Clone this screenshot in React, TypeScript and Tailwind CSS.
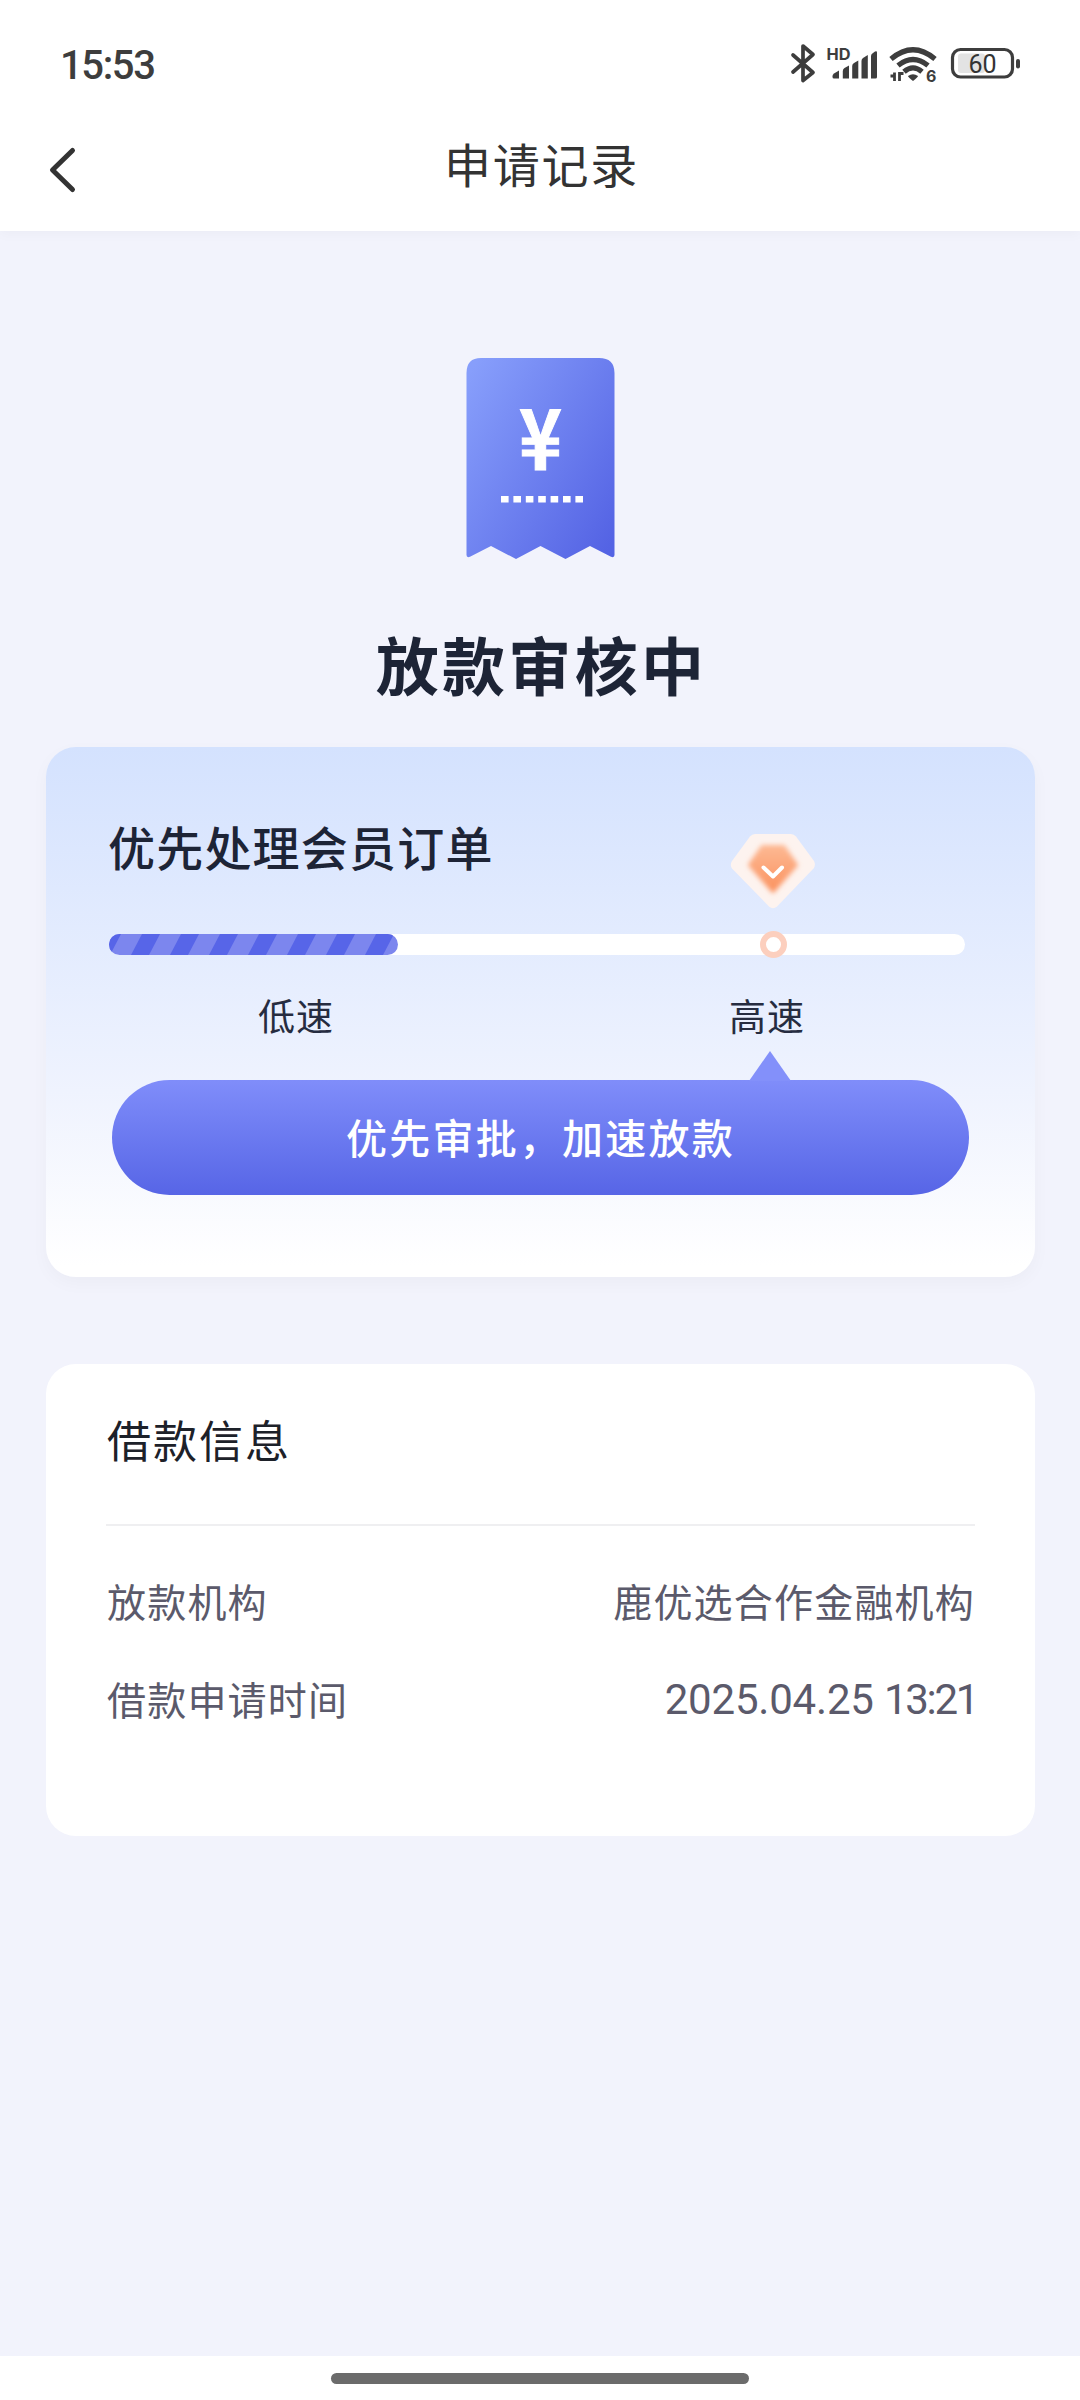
import React from "react";

function StatusIcons() {
  return (
    <svg width="236" height="44" viewBox="0 0 236 44" fill="none">
      {/* bluetooth */}
      <path d="M3 11 L23 28.500 L13 36.500 V2 L23 10.500 L3 28" transform="translate(0 1)" stroke="#3d3d3d" strokeWidth="3.7" strokeLinejoin="round" strokeLinecap="round" />
      {/* cellular signal */}
      <text x="36.500" y="17" fontFamily="Inter" fontWeight="700" fontSize="16" textLength="24" lengthAdjust="spacingAndGlyphs" fill="#3d3d3d">HD</text>
      <g fill="#3d3d3d" transform="translate(1 1)">
        <path d="M41.500 32 Q41.500 30.500 43 29.500 L48 26.500 V34.5 H43 Q41.500 34.500 41.500 33Z" />
        <path d="M51.800 27 Q51.800 25 53.500 24 L58 21.500 V34.5 H51.800Z" />
        <path d="M61.200 22 Q61.200 20 63 19 L67.300 16.500 V34.5 H61.200Z" />
        <path d="M70.500 17 Q70.500 15 72 14 L76.800 11 V34.5 H70.500Z" />
        <path d="M80 12 Q80 10 82 9 L84 7.500 Q86 6.500 86 8.500 V33 Q86 34.5 84.5 34.5 H80Z" />
      </g>
      {/* wifi */}
      <g transform="translate(1 1)">
        <g stroke="#3d3d3d" strokeWidth="5.200" fill="none">
          <path d="M100 15 Q122 -3.500 144 15" />
          <path d="M107 21.500 Q122 9.500 137 21.500" />
          <path d="M113 27.800 Q122 20 131 27.800" />
        </g>
        <path d="M117 32 Q122 28.500 127 32 Q127 33 122 37 Q117 33 117 32Z" fill="#3d3d3d" />
        <path d="M99.500 32 H103.500 V37 V28.500 M108.500 37 V29.500 H112.500" stroke="#3d3d3d" strokeWidth="2.800" />
        <text x="135" y="37.500" fontFamily="Inter" fontWeight="700" fontSize="16" fill="#3d3d3d">6</text>
      </g>
      {/* battery */}
      <rect x="168" y="10.500" width="27" height="19.500" rx="3" fill="#e3e3e3" />
      <rect x="162.500" y="6.500" width="60" height="27.500" rx="8" stroke="#3d3d3d" strokeWidth="3.200" />
      <rect x="226" y="16" width="4" height="9.500" rx="2" fill="#3d3d3d" />
      <text x="192.500" y="29.500" textAnchor="middle" fontFamily="Roboto" fontWeight="400" fontSize="25" fill="#333">60</text>
    </svg>
  );
}

function StatusBar() {
  return (
    <div className="flex h-[127px] items-start justify-between pl-[60px] pr-[54px]">
      <span className="mt-[42px] font-[Roboto] text-[40px] leading-[48px] font-medium tracking-[-1.400px] text-[#3d3d3d]">15:53</span>
      <div className="mt-[43px]">
        <StatusIcons />
      </div>
    </div>
  );
}

function NavBar() {
  return (
    <div className="relative flex h-[104px] items-start justify-center">
      <svg className="absolute left-[48px] top-[19px]" width="30" height="50" viewBox="0 0 30 50" fill="none">
        <path d="M24.500 4.500 L4.500 24 L24.500 43.500" stroke="#333" strokeWidth="5" strokeLinecap="round" strokeLinejoin="round" />
      </svg>
      <h1 className="mt-[4px] pl-[3px] text-[47px] leading-[64px] tracking-[1.800px] text-[#333]">申请记录</h1>
    </div>
  );
}

function ReceiptIcon() {
  return (
    <svg width="150" height="202" viewBox="0 0 150 202">
      <defs>
        <linearGradient id="receipt" x1="0" y1="0.1" x2="1" y2="0.900">
          <stop offset="0" stopColor="#879efb" />
          <stop offset="1" stopColor="#5463e4" />
        </linearGradient>
      </defs>
      <path d="M1.500 15 Q1.500 0 16 0 H134 Q149.500 0 149.500 15 V197 Q149.500 200 146 198.800 L125 188 L100.500 201 L75.500 188 L51 201 L26 188 L5 198.800 Q1.500 200 1.500 197Z" fill="url(#receipt)" />
      <text x="54" y="112" fontFamily="Noto Sans CJK SC" fontWeight="700" fontSize="84" textLength="43" lengthAdjust="spacingAndGlyphs" fill="#fff" stroke="#fff" strokeWidth="1">¥</text>
      <path d="M36 141.300 H119" stroke="#fff" strokeWidth="6.600" strokeDasharray="7.600 4.800" />
    </svg>
  );
}

function DiamondIcon() {
  return (
    <svg width="86" height="76" viewBox="0 0 86 76" fill="none">
      <defs>
        <linearGradient id="gem" x1="0" y1="0" x2="0" y2="1">
          <stop offset="0" stopColor="#fdb892" />
          <stop offset="1" stopColor="#fb925f" />
        </linearGradient>
        <filter id="gemBlur" x="-30%" y="-30%" width="160%" height="160%">
          <feGaussianBlur stdDeviation="2.600" />
        </filter>
      </defs>
      <path d="M25 1 H61 Q64 1 66 3.500 L84 28 Q86 32 83.500 35.500 L47 73.500 Q43 77 39 73.500 L2 35.500 Q-0.500 32 2 28 L20 3.500 Q22 1 25 1Z" fill="#fdf3ef" />
      <path d="M32 13 H54 L67 32 L43 59 L19 32Z" fill="url(#gem)" stroke="url(#gem)" strokeWidth="2" strokeLinejoin="round" filter="url(#gemBlur)" />
      <path d="M33.500 34.500 L43 43.500 L52 34.500" stroke="#fff" strokeWidth="4" strokeLinecap="round" strokeLinejoin="round" />
    </svg>
  );
}

const STRIPES = [0, 1, 2, 3, 4, 5, 6, 7];

function SpeedBar() {
  return (
    <div className="relative ml-[63px] h-[21px] w-[856px] rounded-full bg-white">
      <div className="h-full w-[289px] overflow-hidden rounded-full">
        <svg width="289" height="21" viewBox="0 0 289 21">
          <rect width="289" height="21" fill="#7c86ee" />
          {STRIPES.map((i) => (
            <path key={i} d="M-6 0 H12 L1 21 H-17Z" transform={`translate(${i * 39} 0)`} fill="#5765e8" />
          ))}
        </svg>
      </div>
      <div className="absolute -top-[3px] left-[651px] size-[27px] rounded-full border-[6px] border-[#fccfbe] bg-white" />
      <div className="absolute -top-[101px] left-[621px]">
        <DiamondIcon />
      </div>
    </div>
  );
}

function PriorityCard() {
  return (
    <section className="mr-[45px] ml-[46px] mt-[40px] h-[530px] rounded-[30px] bg-linear-to-b from-[#d4e2fe] via-[#eff3fe] via-65% to-white to-98% pt-[65px] shadow-[0_6px_18px_rgba(0,0,0,0.03)]">
      <h3 className="mb-[54px] ml-[62px] text-[47px] leading-[68px] font-medium tracking-[1.200px] text-[#1d2436]">优先处理会员订单</h3>
      <SpeedBar />
      <div className="mt-[33px] flex pl-[212px] text-[37px] leading-[54px] tracking-[1px] text-[#262c40]">
        <span className="w-[471px]">低速</span>
        <span>高速</span>
      </div>
      <div className="relative ml-[66px] mt-[38px]">
        <svg className="absolute -top-[29px] left-[637px]" width="42" height="30" viewBox="0 0 42 30">
          <path d="M21 0 L42 30 H0Z" fill="#8390fa" />
        </svg>
        <button className="flex h-[115px] w-[857px] items-center justify-center rounded-full bg-linear-to-b from-[#808dfa] to-[#5765e6] pb-[2px] text-[41px] font-medium tracking-[2.200px] text-white">
          优先审批，加速放款
        </button>
      </div>
    </section>
  );
}

function InfoRow({ label, value, className }: { label: string; value: React.ReactNode; className: string }) {
  return (
    <div className={`flex items-center justify-between text-[39px] leading-[56px] tracking-[1.200px] text-[#5b5a6b] ${className}`}>
      <span className="pl-px">{label}</span>
      {value}
    </div>
  );
}

function LoanInfoCard() {
  return (
    <section className="mr-[45px] ml-[46px] mt-[87px] h-[472px] rounded-[30px] bg-white px-[60px] pt-[43px]">
      <h3 className="pl-px text-[44px] leading-[64px] tracking-[2px] text-[#1d2129]">借款信息</h3>
      <div className="mt-[53px] h-[2px] bg-[#efeff1]" />
      <InfoRow className="mt-[46px]" label="放款机构" value={<span>鹿优选合作金融机构</span>} />
      <InfoRow
        className="mt-[42px]"
        label="借款申请时间"
        value={
          <span className="-mr-[2px] pt-[4px] font-[Roboto] text-[42px] leading-[52px] tracking-[-0.200px]">
            2025.04.25 <span className="tracking-[-2.300px]">13:21</span>
          </span>
        }
      />
    </section>
  );
}

export default function App() {
  return (
    <div className="flex h-[2400px] w-[1080px] flex-col bg-[#f2f3fc] font-['Noto_Sans_CJK_SC',sans-serif]">
      <header className="relative h-[231px] shrink-0 bg-white shadow-[0_3px_12px_rgba(0,0,0,0.03)]">
        <StatusBar />
        <NavBar />
      </header>
      <main className="flex-1">
        <div className="mt-[127px] flex flex-col items-center">
          <ReceiptIcon />
          <h2 className="mt-[59px] pl-[3px] text-[63px] leading-[88px] font-bold tracking-[3.300px] text-[#1d2436]">放款审核中</h2>
        </div>
        <PriorityCard />
        <LoanInfoCard />
      </main>
      <footer className="flex h-[44px] shrink-0 justify-center bg-white pt-[17px]">
        <div className="h-[11px] w-[418px] rounded-full bg-[#6b6b6b]" />
      </footer>
    </div>
  );
}
